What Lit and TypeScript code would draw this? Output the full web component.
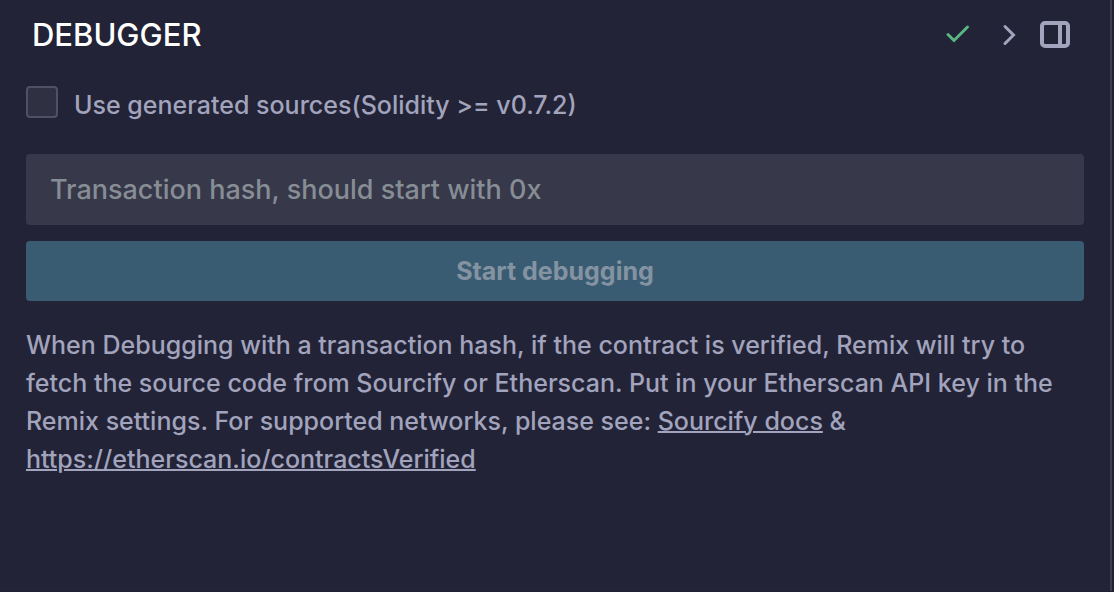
import { LitElement, html, css } from "lit";
import { customElement } from "lit/decorators.js";

@customElement("app-root")
export class AppRoot extends LitElement {
  static styles = css`
    :host {
      display: flex;
      box-sizing: border-box;
      min-height: 100vh;
      background: #1f2030;
      color: #a2a3bd;
      padding-right: 2px;
      border-bottom: 1px solid #1f2030;
      font: 450 25px/38px Inter, sans-serif;
    }
    .panel {
      flex: 1;
      min-width: 0;
      background: #222336;
      border-right: 2px solid #3b3c50;
    }
    header {
      display: flex;
      align-items: center;
      justify-content: space-between;
      height: 70px;
      padding: 0 40px 0 32px;
    }
    h1 {
      margin: 0;
      color: #fff;
      font: 450 31px/40px Inter, sans-serif;
    }
    .actions {
      display: flex;
      align-items: center;
      gap: 24px;
    }
    .actions svg {
      display: block;
    }
    button {
      font-family: inherit;
      border: 0;
      padding: 0;
      background: none;
      color: inherit;
    }
    main {
      padding: 16px 26px 24px;
    }
    .option {
      display: flex;
      align-items: flex-start;
      gap: 16px;
    }
    .option input {
      appearance: none;
      box-sizing: border-box;
      width: 32px;
      height: 32px;
      margin: 0;
      border: 2px solid #4f5064;
      border-radius: 4px;
      background: #2f3042;
    }
    .hash {
      display: block;
      box-sizing: border-box;
      width: 100%;
      height: 71px;
      margin-top: 30px;
      padding: 0 24px;
      border: 0;
      border-radius: 4px;
      background: #37384a;
      color: #a2a3bd;
      font: 450 27px/40px Inter, sans-serif;
    }
    .hash::placeholder {
      color: #868d94;
      opacity: 1;
    }
    .start {
      display: block;
      width: 100%;
      height: 60px;
      margin: 16px 0 25px;
      border-radius: 4px;
      background: #395c72;
      color: #8493a2;
      font: 700 25px/38px Inter, sans-serif;
    }
    p {
      margin: 0;
      padding-right: 8px;
    }
    a {
      color: inherit;
      text-decoration-thickness: 2px;
    }
  `;

  render() {
    return html`
      <div class="panel">
        <header>
          <h1>DEBUGGER</h1>
          <div class="actions">
            <svg width="28" height="28" viewBox="0 0 28 28" fill="none" stroke="#59b783" stroke-width="3" stroke-linecap="round"><path d="M4 13.500l6 6L23.500 6" /></svg>
            <button aria-label="Expand"><svg width="20" height="28" viewBox="0 0 20 28" fill="none" stroke="#a2a3bd" stroke-width="3" stroke-linecap="round"><path d="M9 5.500l8.500 8.500-8.500 8.500" /></svg></button>
            <button aria-label="Move panel"><svg width="30" height="28" viewBox="0 0 30 28" fill="none" stroke="#a2a3bd" stroke-width="4"><rect x="2" y="2" width="26" height="23" rx="3" /><path d="M20 3v22" /></svg></button>
          </div>
        </header>
        <main>
          <label class="option"><input type="checkbox" />Use generated sources(Solidity &gt;= v0.7.2)</label>
          <input class="hash" type="text" aria-label="Transaction hash" placeholder="Transaction hash, should start with 0x" />
          <button class="start" disabled>Start debugging</button>
          <p>When Debugging with a transaction hash, if the contract is verified, Remix will try to fetch the source code from Sourcify or Etherscan. Put in your Etherscan API key in the Remix settings. For supported networks, please see: <a href="#sourcify">Sourcify docs</a> &amp; <a href="https://etherscan.io/contractsVerified">https://etherscan.io/contractsVerified</a></p>
        </main>
      </div>
    `;
  }
}
